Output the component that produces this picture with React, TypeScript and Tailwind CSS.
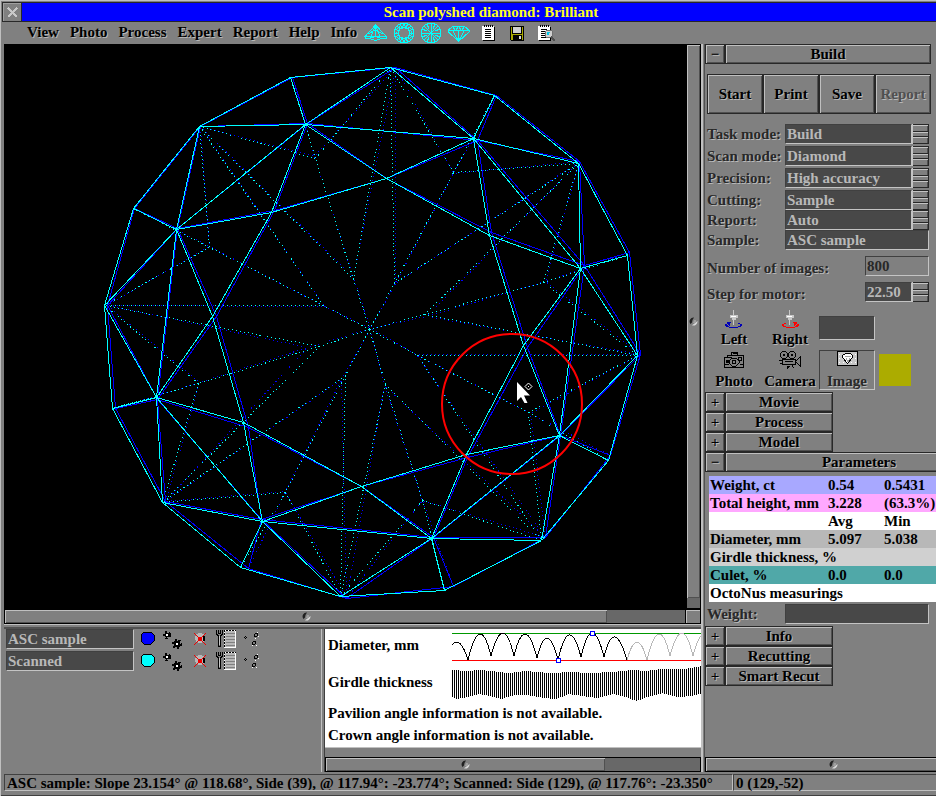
import { useMemo, useState } from 'react';
import type { ReactNode } from 'react';
import clsx from 'clsx';

type Point = [number, number];

interface IWireModel {
  girdle: Point[];
  crown: Point[];
  table: Point[];
  pavilion: Point[];
  lower: Point[];
  culet: Point;
}

const RAISED = 'border border-[#282828] bg-[#808080] shadow-[inset_1px_1px_0_#c0c0c0,inset_-1px_-1px_0_#505050]';
const SUNKEN = 'border border-t-[#404040] border-l-[#404040] border-r-[#c4c4c4] border-b-[#c4c4c4]';
const EMBOSS = '[text-shadow:1px_1px_0_#b8b8b8]';

const scannedModel: IWireModel = {
  girdle: [[390, 67], [494, 95], [578, 163], [627, 255], [637, 355], [608, 460], [541, 540], [444, 590], [340, 596], [240, 567], [162, 502], [112, 408], [104, 305], [133, 208], [199, 126], [290, 77]],
  crown: [[305, 124], [473, 138], [580, 268], [559, 435], [431, 538], [262, 521], [156, 397], [176, 229]],
  table: [[386, 178], [489, 235], [523, 345], [466, 454], [361, 486], [243, 422], [212, 316], [271, 212]],
  pavilion: [[394, 283], [424, 314], [417, 355], [385, 384], [345, 375], [319, 346], [323, 305], [353, 279]],
  lower: [[453, 172], [543, 282], [528, 412], [422, 500], [285, 492], [198, 383], [209, 247], [315, 158]],
  culet: [369, 329],
};

const sampleModel: IWireModel = {
  girdle: [[395, 67], [496, 95], [579, 161], [629, 252], [640, 354], [610, 455], [545, 537], [453, 586], [346, 598], [248, 568], [165, 501], [115, 408], [107, 305], [134, 208], [200, 126], [292, 77]],
  crown: [[307, 123], [477, 140], [584, 265], [560, 435], [433, 537], [261, 519], [157, 399], [177, 228]],
  table: [[386, 178], [491, 232], [527, 347], [467, 457], [361, 486], [248, 427], [216, 316], [274, 210]],
  pavilion: [[395, 283], [426, 316], [416, 354], [384, 385], [341, 379], [307, 347], [324, 306], [353, 277]],
  lower: [[453, 173], [545, 281], [530, 413], [422, 500], [285, 491], [199, 382], [209, 246], [314, 156]],
  culet: [370, 328],
};

function line(a: Point, b: Point) {
  return `M${a[0] + 0.5} ${a[1] + 0.5}L${b[0] + 0.5} ${b[1] + 0.5}`;
}

function getSolidPath(m: IWireModel) {
  const parts: string[] = [];
  m.girdle.forEach((p, i) => parts.push(line(p, m.girdle[(i + 1) % 16])));
  m.crown.forEach((p, i) => {
    // crown points sit next to the odd girdle corners
    parts.push(line(p, m.girdle[(i * 2 + 15) % 16]));
    parts.push(line(p, m.girdle[(i * 2 + 14) % 16]));
    parts.push(line(p, m.girdle[(i * 2) % 16]));
    parts.push(line(p, m.crown[(i + 1) % 8]));
    parts.push(line(p, m.table[i]));
    parts.push(line(p, m.table[(i + 7) % 8]));
    parts.push(line(m.table[i], m.table[(i + 1) % 8]));
  });
  return parts.join('');
}

function getDottedPath(m: IWireModel) {
  const parts: string[] = [];
  m.pavilion.forEach((p, i) => {
    const even = m.girdle[i * 2];
    const next = m.girdle[(i * 2 + 2) % 16];
    const q = m.lower[i];
    parts.push(line(m.culet, p));
    parts.push(line(p, even));
    parts.push(line(p, next));
    parts.push(line(p, q));
    parts.push(line(q, even));
    parts.push(line(q, next));
    parts.push(line(q, m.girdle[i * 2 + 1]));
  });
  return parts.join('');
}

function DiamondView() {
  const paths = useMemo(() => ({
    sampleSolid: getSolidPath(sampleModel),
    sampleDotted: getDottedPath(sampleModel),
    scannedSolid: getSolidPath(scannedModel),
    scannedDotted: getDottedPath(scannedModel),
  }), []);

  return (
    <svg viewBox="4 44 682 565" className="block h-full w-full" fill="none" role="img" aria-label="Diamond wireframe">
      <g shapeRendering="crispEdges" strokeWidth="1">
        <path d={paths.sampleDotted} stroke="#0000ff" strokeDasharray="1 3" strokeDashoffset="2" />
        <path d={paths.scannedDotted} stroke="#00ffff" strokeDasharray="1 3" />
        <path d={paths.sampleSolid} stroke="#0000ff" />
        <path d={paths.scannedSolid} stroke="#00ffff" />
      </g>
      <circle cx="512" cy="404" r="70" stroke="#ff0000" strokeWidth="2" />
      <path d="M517 382V401L521 397L524.5 403H527.5L524 395.500H530Z" fill="#fff" />
      <path d="M528.5 383L532 386.5L528.5 390L525 386.5Z" stroke="#fff" />
      <path d="M528 386h1v1h-1z" fill="#fff" />
    </svg>
  );
}

function Knob() {
  return (
    <svg width="9" height="9" viewBox="0 0 9 9" className="shrink-0">
      <circle cx="4.5" cy="4.5" r="4" fill="#808080" />
      <path d="M5 0.5A4 4 0 0 0 1.5 7L3 5.5L3.500 3Z" fill="#202020" />
      <path d="M8.5 4A4 4 0 0 1 3 8.2L5.500 6.500Z" fill="#d8d8d8" />
      <path d="M5 3h2v3H4z" fill="#a0a0a0" />
    </svg>
  );
}

function Thumb({ className }: { className?: string }) {
  return (
    <div className={clsx('flex items-center justify-center bg-[#808080] shadow-[inset_1px_1px_0_#c0c0c0,inset_-1px_-1px_0_#505050]', className)}>
      <Knob />
    </div>
  );
}

function Spinner() {
  return (
    <svg width="17" height="20" viewBox="0 0 17 20" shapeRendering="crispEdges" className="pointer-events-none shrink-0">
      <path d="M0 0h17v20H0z" fill="#282828" />
      <path d="M0 0h1v20H0z" fill="#c4c4c4" />
      <path d="M1 1h15v6H1zM1 8h15v4H1zM1 13h15v6H1z" fill="#808080" />
      <path d="M1 1h15v1H1zM1 8h15v1H1zM1 13h15v1H1z" fill="#c4c4c4" />
      <path d="M15 2h1v5h-1zM15 14h1v5h-1z" fill="#505050" />
    </svg>
  );
}

function SectionHeader({ title, open, wide }: { title: string; open?: boolean; wide?: boolean }) {
  return (
    <div className="flex h-5">
      <button type="button" aria-label={`Toggle ${title}`} className={clsx('w-5 shrink-0 leading-4', RAISED, EMBOSS)}>
        {open ? '−' : '+'}
      </button>
      <button type="button" className={clsx('shrink-0 leading-4', wide ? 'w-[268px]' : open ? 'w-[206px]' : 'w-[108px]', RAISED, EMBOSS)}>
        {title}
      </button>
    </div>
  );
}

const selects = [
  { id: 'task', label: 'Task mode:', value: 'Build' },
  { id: 'scan', label: 'Scan mode:', value: 'Diamond' },
  { id: 'precision', label: 'Precision:', value: 'High accuracy' },
  { id: 'cutting', label: 'Cutting:', value: 'Sample' },
  { id: 'report', label: 'Report:', value: 'Auto' },
];

const fieldLabel = clsx('text-[#282828]', EMBOSS);
const darkField = clsx('h-5 bg-[#484848] px-px leading-4 text-[#b8b8b8] outline-none', SUNKEN);

function MotorIcon({ color, flip }: { color: string; flip?: boolean }) {
  return (
    <svg width="18" height="20" viewBox="0 0 18 20" shapeRendering="crispEdges">
      <path d="M8 1h1v5H8zM8 10h1v6H8zM5 6h8v3H5zM7 9h4v2H7z" fill="#c8c8c8" />
      <path d="M6 7h5v1H6z" fill="#fff" />
      <g transform={flip ? 'translate(18 0) scale(-1 1)' : undefined} fill={color}>
        <path d="M2 13h4v1H5v3H4v-1H3v1H2v-1h1v-1H2zM0 15h2v2H0zM1 17h3v1H1zM4 18h9v1H4zM13 17h3v1h-3zM15 15h2v2h-2zM13 14h2v1h-2z" />
      </g>
    </svg>
  );
}

function PhotoIcon() {
  return (
    <svg width="22" height="18" viewBox="0 0 22 18" fill="none" stroke="#000" shapeRendering="crispEdges">
      <path d="M1.500 6.500h3v-2h4v-3h6v3h6v12h-19zM8.500 4.500h6M4.500 6.500h4M15.500 6.500h3v3h-3zM1.500 13.500h4M16.500 13.500h4M9.500 2.500h4" />
      <path d="M9 7h4l3 3v2l-3 3H9l-3-3v-2zM9.500 9.500h3v3h-3z" />
      <path d="M3 9h2v2H3z" fill="#000" />
    </svg>
  );
}

function CameraIcon() {
  return (
    <svg width="22" height="18" viewBox="0 0 22 18" fill="none" stroke="#000" shapeRendering="crispEdges">
      <circle cx="5" cy="4" r="3.500" />
      <circle cx="13" cy="4" r="3.500" />
      <path d="M4.500 3.500h1v1h-1zM12.500 3.500h1v1h-1zM3.500 8.500h13v5h-13zM6 10.500h8M0 9.500h3M1 12.500h2M17 10l4-4v9l-4-4M8 15.500h2l-2 2M13 14v1l2 2" />
    </svg>
  );
}

function ImageIcon() {
  return (
    <svg width="21" height="15" viewBox="0 0 21 15" fill="none" shapeRendering="crispEdges">
      <path d="M.5.5h20v14H.5z" fill="#c8c8c8" stroke="#000" />
      <path d="M2 3h17M2 7h17M2 11h17" stroke="#fff" strokeDasharray="1 3" />
      <path d="M8.500 2.500h5l2 2v2l-5 6-5-6v-2z" fill="#fff" stroke="#000" />
      <path d="M8 5.500h6M9 7.500l2 3 2-3" stroke="#a0a0a0" />
    </svg>
  );
}

function ToolButton({ title, icon, active }: { title: string; icon: ReactNode; active?: boolean }) {
  return (
    <button
      type="button"
      className={clsx('flex h-10 w-14 flex-col items-center justify-between', active ? clsx(SUNKEN, 'text-[#282828]') : 'border border-transparent', EMBOSS)}
    >
      {icon}
      <span className="leading-4">{title}</span>
    </button>
  );
}

const params = [
  { name: 'Weight, ct', avg: '0.54', min: '0.5431', bg: 'bg-[#a8a8ff]' },
  { name: 'Total height, mm', avg: '3.228', min: '(63.3%)', bg: 'bg-[#ffa8ff]' },
  { name: '', avg: 'Avg', min: 'Min', bg: 'bg-white' },
  { name: 'Diameter, mm', avg: '5.097', min: '5.038', bg: 'bg-[#b8b8b8]' },
  { name: 'Girdle thickness, %', avg: '', min: '', bg: 'bg-[#d0d0d0]' },
  { name: 'Culet, %', avg: '0.0', min: '0.0', bg: 'bg-[#50a8a8]' },
  { name: 'OctoNus measurings', avg: '', min: '', bg: 'bg-white' },
];

function BuildPanel() {
  const [steps, setSteps] = useState('22.50');

  return (
    <aside className="flex w-[231px] shrink-0 flex-col overflow-hidden">
      <SectionHeader title="Build" open />
      <div className="mt-2.5 ml-0.5 flex">
        {['Start', 'Print', 'Save', 'Report'].map((d) => (
          <button
            key={d}
            type="button"
            disabled={d === 'Report'}
            className={clsx('h-10 w-14', RAISED, EMBOSS, d === 'Report' && 'text-[#505050]')}
          >
            {d}
          </button>
        ))}
      </div>

      <form className="mt-2.5 flex flex-col pr-[7px] pl-0.5">
        {selects.map((d) => (
          <div key={d.id} className={clsx('flex items-center', d.id !== 'cutting' && d.id !== 'report' && 'mb-0.5')}>
            <label htmlFor={d.id} className={clsx('w-[78px] shrink-0', fieldLabel)}>{d.label}</label>
            <select id={d.id} className={clsx('min-w-0 flex-1 appearance-none', darkField)}>
              <option>{d.value}</option>
            </select>
            <Spinner />
          </div>
        ))}
        <div className="flex items-center">
          <label htmlFor="sample" className={clsx('w-[78px] shrink-0', fieldLabel)}>Sample:</label>
          <input id="sample" defaultValue="ASC sample" className={clsx('min-w-0 flex-1', darkField)} />
        </div>
        <div className="mt-1.5 flex h-5 justify-between">
          <label htmlFor="images" className={clsx('pt-0.5', fieldLabel)}>Number of images:</label>
          <input id="images" readOnly value="800" className={clsx('h-5 w-16 px-px leading-4 text-[#282828]', SUNKEN)} />
        </div>
        <div className="mt-1.5 flex h-5">
          <label htmlFor="step" className={clsx('flex-1 pt-0.5', fieldLabel)}>Step for motor:</label>
          <input id="step" value={steps} onChange={(e) => setSteps(e.target.value)} className={clsx('w-[47px]', darkField)} />
          <Spinner />
        </div>
      </form>

      <div className="mt-1.5 ml-px flex flex-col gap-0.5">
        <div className="flex items-center">
          <ToolButton title="Left" icon={<MotorIcon color="#0000b8" />} />
          <ToolButton title="Right" icon={<MotorIcon color="#ff0000" flip />} />
          <input aria-label="Motor position" className={clsx('ml-px w-14', darkField, 'h-6')} />
        </div>
        <div className="flex items-center">
          <ToolButton title="Photo" icon={<PhotoIcon />} />
          <ToolButton title="Camera" icon={<CameraIcon />} />
          <div className="ml-px"><ToolButton title="Image" icon={<ImageIcon />} active /></div>
          <div className="ml-1 size-8 bg-[#acac00]" />
        </div>
      </div>

      <div className="mt-0.5">
        <SectionHeader title="Movie" />
        <SectionHeader title="Process" />
        <SectionHeader title="Model" />
        <SectionHeader title="Parameters" open wide />
      </div>

      <table className="mt-1 ml-1 w-[227px] table-fixed border-collapse text-left whitespace-nowrap">
        <colgroup>
          <col className="w-[119px]" />
          <col className="w-14" />
          <col />
        </colgroup>
        <tbody>
          {params.map((d) => (
            <tr key={d.bg + d.name} className={clsx('h-[18px] leading-4', d.bg)}>
              <td className="p-0 pl-px">{d.name}</td>
              <td className="p-0">{d.avg}</td>
              <td className="p-0">{d.min}</td>
            </tr>
          ))}
        </tbody>
      </table>

      <div className="mt-0.5 flex items-center pr-[7px] pl-0.5">
        <label htmlFor="weight" className={clsx('w-[78px]', fieldLabel)}>Weight:</label>
        <input id="weight" className={clsx('min-w-0 flex-1', darkField)} />
      </div>
      <div className="mt-0.5">
        <SectionHeader title="Info" />
        <SectionHeader title="Recutting" />
        <SectionHeader title="Smart Recut" />
      </div>

      <div className="mt-auto h-[15px] border border-r-0 border-black">
        <Thumb className="h-full w-[255px]" />
      </div>
    </aside>
  );
}

function CrownIcon() {
  return (
    <svg width="24" height="18" viewBox="0 0 24 18" fill="none" stroke="#00ffff" shapeRendering="crispEdges">
      <path d="M11.500 1L1 12.500h21.500zM1 12.500v2h4l6.500 2 6.500-2h4.500v-2M11.500 1L7 12.500M11.500 1v11M11.500 1L16 12.500M5 14.500l6-2 7 2M4 10l7-4 8 4" />
    </svg>
  );
}

function GirdleIcon() {
  return (
    <svg width="22" height="22" viewBox="0 0 22 22" fill="none" stroke="#00ffff" shapeRendering="crispEdges">
      <circle cx="11" cy="11" r="10" />
      <circle cx="11" cy="11" r="5.500" />
      <path d="M7 1.500l2 5 2-5 2 5 2-5M1.500 7l5 2M1 11l4.500 0M1.500 15l5-2M20.500 7l-5 2M21 11h-4.500M20.500 15l-5-2M7 20.500l2-5 2 5 2-5 2 5M3.500 4L8 7M18.500 4L14 7M3.500 18L8 15M18.500 18L14 15" />
      <circle cx="11" cy="11" r="8" strokeDasharray="2 2" />
    </svg>
  );
}

function PavilionIcon() {
  return (
    <svg width="22" height="22" viewBox="0 0 22 22" fill="none" stroke="#00ffff" shapeRendering="crispEdges">
      <circle cx="11" cy="11" r="10" />
      <path d="M11 1v20M1 11h20M4 4l14 14M18 4L4 18M7 2l2 5M15 2l-2 5M7 20l2-5M15 20l-2-5M2 7l5 2M2 15l5-2M20 7l-5 2M20 15l-5-2" />
    </svg>
  );
}

function SideIcon() {
  return (
    <svg width="24" height="18" viewBox="0 0 24 18" fill="none" stroke="#00ffff" shapeRendering="crispEdges">
      <path d="M5.500 2.500h12l5 4v1l-11 10-10.500-10v-1zM1 6.500h21.500M5.500 2.500l3 4 3-4 3 4 3-4M6 7.500l5.500 9.500 5.500-9.500M11.500 7v10" />
    </svg>
  );
}

function NotesIcon({ search }: { search?: boolean }) {
  return (
    <svg width={search ? 18 : 14} height="17" viewBox={search ? '0 0 18 17' : '0 0 14 17'} shapeRendering="crispEdges">
      <path d="M1 2h12v14H1z" fill="#000" />
      <path d="M0 1h12v14H0z" fill="#fff" />
      <path d="M2 0h1v2H2zM4 0h1v2H4zM6 0h1v2H6zM8 0h1v2H8zM10 0h1v2h-1zM3 4h6v1H3zM3 6h6v1H3zM3 8h6v1H3zM3 10h6v1H3zM3 12h6v1H3z" fill="#000" />
      {search && (
        <>
          <circle cx="11" cy="9" r="4" fill="#d0d0d0" stroke="#707070" />
          <path d="M9 7h3v1h-1v2H9z" fill="#00c8e8" />
          <path d="M13 12l4 4" stroke="#505050" strokeWidth="2" />
        </>
      )}
    </svg>
  );
}

function DiskIcon() {
  return (
    <svg width="14" height="15" viewBox="0 0 14 15" shapeRendering="crispEdges">
      <path d="M0 0h14v15H1v-1H0z" fill="#000" />
      <path d="M1 1h12v13H1z" fill="#a8a800" />
      <path d="M2 0h10v8H2z" fill="#000" />
      <path d="M3 1h8v6H3z" fill="#d0d0d0" />
      <path d="M3 9h9v5H3z" fill="#000" />
      <path d="M9 10h2v3H9z" fill="#e0e0e0" />
    </svg>
  );
}

function Gear({ x, y, r }: { x: number; y: number; r: number }) {
  return (
    <g transform={`translate(${x} ${y})`} stroke="#000" fill="none">
      <circle r={r - 1.5} strokeWidth="2" />
      <circle r={r} strokeWidth="2" strokeDasharray="2 2" />
      <circle r="1" fill="#fff" stroke="none" />
    </g>
  );
}

function RowIcons({ color }: { color: string }) {
  return (
    <svg width="122" height="20" viewBox="138 629 122 20" fill="none" shapeRendering="crispEdges">
      <path d="M144 632h7l3 3v6l-3 3h-7l-3-3v-6z" fill={color} stroke="#000" />
      <Gear x={167} y={635} r={3} />
      <Gear x={177} y={644} r={4} />
      <circle cx="200" cy="638" r="5" fill="#b8b8b8" />
      <path d="M203 636h2v5h-2z" fill="#000" />
      <path d="M194 633l12 12M206 633l-12 12" stroke="#f00000" strokeWidth="1" />
      <circle cx="200" cy="639" r="2" fill="#f00000" />
      <path d="M216.500 630v4l2 2v10h2v-10l2-2v-4M218.500 630v3h2v-3" stroke="#000" />
      <path d="M219 636h1v9h-1z" fill="#c8c8c8" />
      <path d="M224.500 630.500h11v17h-11z" fill="#b8b8b8" stroke="#fff" />
      <path d="M224.500 647v-16.500h11" stroke="#000" strokeDasharray="2 1" />
      <path d="M226 633.500h9M226 636.500h9M226 639.500h9M226 642.500h9M226 645.500h9" stroke="#808080" />
      <path d="M245.500 636.500l1 1-1 1-1-1z" stroke="#000" />
      <circle cx="256" cy="635" r="1.500" stroke="#000" />
      <circle cx="254" cy="643" r="1.500" stroke="#000" />
      <path d="M257 632h1v1h-1zM258 636h1v1h-1zM255 638h1v1h-1zM256 645h1v1h-1zM252 645h1v1h-1z" fill="#fff" />
    </svg>
  );
}

// alternating dip / peak positions of the diameter curve
const activeWave: Point[] = [[446, 658], [457, 642], [468, 660], [480, 634], [491, 656], [503, 633], [514, 656], [525, 634], [537, 658], [547, 638], [558, 660], [569, 635], [581, 657], [592, 633], [604, 657], [614, 637], [627, 660]];
const nextWave: Point[] = [[627, 660], [637, 642], [647, 660], [659, 634], [670, 656], [682, 633], [693, 656], [704, 634], [715, 656]];

function getWavePath(points: Point[]) {
  let d = `M${points[0][0]} ${points[0][1]}`;
  for (let i = 1; i + 1 < points.length; i += 2) {
    const top = 2 * points[i][1] - (points[i - 1][1] + points[i + 1][1]) / 2;
    d += `Q${points[i][0]} ${top} ${points[i + 1][0]} ${points[i + 1][1]}`;
  }
  return d;
}

const barTops: Point[] = [[452, 670], [468, 671], [478, 670], [492, 671], [508, 673], [524, 671], [550, 673], [570, 672], [590, 673], [612, 672], [632, 670], [645, 671], [660, 669], [685, 669], [702, 666]];
const barBottoms: Point[] = [[452, 697], [457, 699], [468, 697], [478, 694], [486, 695], [501, 699], [514, 695], [525, 695], [544, 698], [556, 699], [568, 694], [582, 696], [598, 698], [612, 694], [622, 696], [636, 701], [650, 696], [662, 693], [678, 697], [690, 696], [702, 693]];

function valueAt(points: Point[], x: number) {
  const idx = points.findIndex((p) => p[0] >= x);
  if (idx <= 0) return points[0][1];
  const [ax, ay] = points[idx - 1];
  const [bx, by] = points[idx];
  return Math.round(ay + ((by - ay) * (x - ax)) / (bx - ax));
}

function MeasureCharts() {
  const bars = useMemo(() => {
    let d = '';
    for (let x = 452; x < 702; x += 2) {
      d += `M${x + 0.5} ${valueAt(barTops, x)}V${valueAt(barBottoms, x)}`;
    }
    return d;
  }, []);

  return (
    <svg width="249" height="78" viewBox="452 630 249 78" fill="none" shapeRendering="crispEdges" className="shrink-0">
      <path d="M452 633.500h250" stroke="#009800" />
      <path d="M452 660.500h250" stroke="#ff0000" />
      <path d={getWavePath(nextWave)} stroke="#b8b8b8" />
      <path d={getWavePath(activeWave)} stroke="#000" />
      <path d="M590.500 631.500h4v4h-4zM556.500 658.500h4v4h-4z" fill="#fff" stroke="#0000ff" />
      <path d={bars} stroke="#000" />
    </svg>
  );
}

function App() {
  return (
    <div className="flex h-screen w-full flex-col overflow-hidden border-t border-l border-[#c0c0c0] bg-[#808080] font-['Liberation_Serif',serif] text-[15px] leading-5 font-bold text-black">
      <header className="mt-px ml-px flex h-5 shrink-0 border border-r-0 border-[#282828] bg-[#0000ff]">
        <button type="button" aria-label="Close" className="flex w-[19px] items-center justify-center border-r border-[#282828] bg-[#808080] shadow-[inset_1px_1px_0_#a0a0a0]">
          <svg width="11" height="11" viewBox="0 0 11 11" stroke="#c8c8c8" strokeWidth="2" shapeRendering="crispEdges">
            <path d="M1 1l9 9M10 1l-9 9" />
          </svg>
        </button>
        <h1 className="flex-1 pl-6 text-center leading-[18px] text-[#ffff20]">Scan polyshed diamond: Brilliant</h1>
      </header>

      <nav className="flex h-[22px] shrink-0 items-center gap-[11px] pb-0.5 pl-[26px]">
        {['View', 'Photo', 'Process', 'Expert', 'Report', 'Help', 'Info'].map((d) => (
          <button key={d} type="button" className={EMBOSS}>{d}</button>
        ))}
        <div className="-ml-1 flex items-center gap-[5px] pt-0.5">
          <button type="button" aria-label="Crown"><CrownIcon /></button>
          <button type="button" aria-label="Top view"><GirdleIcon /></button>
          <button type="button" aria-label="Bottom view"><PavilionIcon /></button>
          <button type="button" aria-label="Side view"><SideIcon /></button>
        </div>
        <div className="flex items-center gap-3.5 pt-0.5">
          <button type="button" aria-label="Notes"><NotesIcon /></button>
          <button type="button" aria-label="Save file"><DiskIcon /></button>
          <button type="button" aria-label="Preview"><NotesIcon search /></button>
        </div>
      </nav>

      <main className="flex min-h-0 flex-1 pl-[3px]">
        <div className="flex min-w-0 flex-1 flex-col">
          <div className="flex min-h-0 flex-1">
            <div className="min-w-0 flex-1 bg-black"><DiamondView /></div>
            <div className="flex w-[15px] flex-col border border-black bg-[#686868]">
              <Thumb className="flex-1" />
              <div className="h-2.5" />
            </div>
          </div>
          <div className="flex h-[15px] shrink-0 border border-black bg-[#686868]">
            <Thumb className="flex-1" />
            <div className="w-[79px] border-r border-black" />
            <div className="w-3.5 bg-[#808080] shadow-[inset_1px_1px_0_#c0c0c0]" />
          </div>
          <div className="h-[5px] shrink-0 border-t border-b-2 border-t-[#c0c0c0] border-b-[#505050]" />

          <div className="flex h-[143px] shrink-0">
            <section className="flex min-w-0 flex-1 flex-col gap-0.5 pl-0.5">
              {[{ name: 'ASC sample', color: '#0000ff' }, { name: 'Scanned', color: '#00ffff' }].map((d) => (
                <div key={d.name} className="flex items-center gap-1">
                  <input aria-label="Model name" defaultValue={d.name} className={clsx('w-32', darkField)} />
                  <RowIcons color={d.color} />
                </div>
              ))}
            </section>
            <div className="w-1 border-r border-l border-r-[#404040] border-l-[#c0c0c0]" />
            <section className="flex w-[376px] flex-col">
              <div className="flex h-[119px] flex-col border-b border-[#c0c0c0] bg-white pt-px pl-[3px]">
                <div className="flex justify-between">
                  <div className="flex flex-col pt-[5px]">
                    <p>Diameter, mm</p>
                    <p className="mt-[17px]">Girdle thickness</p>
                  </div>
                  <MeasureCharts />
                </div>
                <p className="-mt-[5px]">Pavilion angle information is not available.</p>
                <p className="mt-0.5">Crown angle information is not available.</p>
              </div>
              <div className="mt-auto flex h-[15px] border border-black bg-[#686868]">
                <Thumb className="w-[279px]" />
              </div>
            </section>
          </div>
        </div>

        <div className="w-1 shrink-0 border-r border-l-2 border-r-[#505050] border-l-[#c0c0c0]" />
        <BuildPanel />
      </main>

      <footer className="flex h-6 shrink-0 border-b border-[#404040] pt-0.5 pb-1 pl-[3px]">
        <div className="w-[729px] shrink-0 overflow-hidden border border-t-[#404040] border-r-[#c0c0c0] border-b-[#c0c0c0] border-l-[#404040] pl-0.5 leading-4 whitespace-nowrap">
          ASC sample: Slope 23.154° @ 118.68°, Side (39), @ 117.94°: -23.774°; Scanned: Side (129), @ 117.76°: -23.350°
        </div>
        <div className="flex-1 border-y border-l border-t-[#404040] border-b-[#c0c0c0] border-l-[#404040] pl-0.5 leading-4">
          0 (129,-52)
        </div>
      </footer>
    </div>
  );
}

export default App;
